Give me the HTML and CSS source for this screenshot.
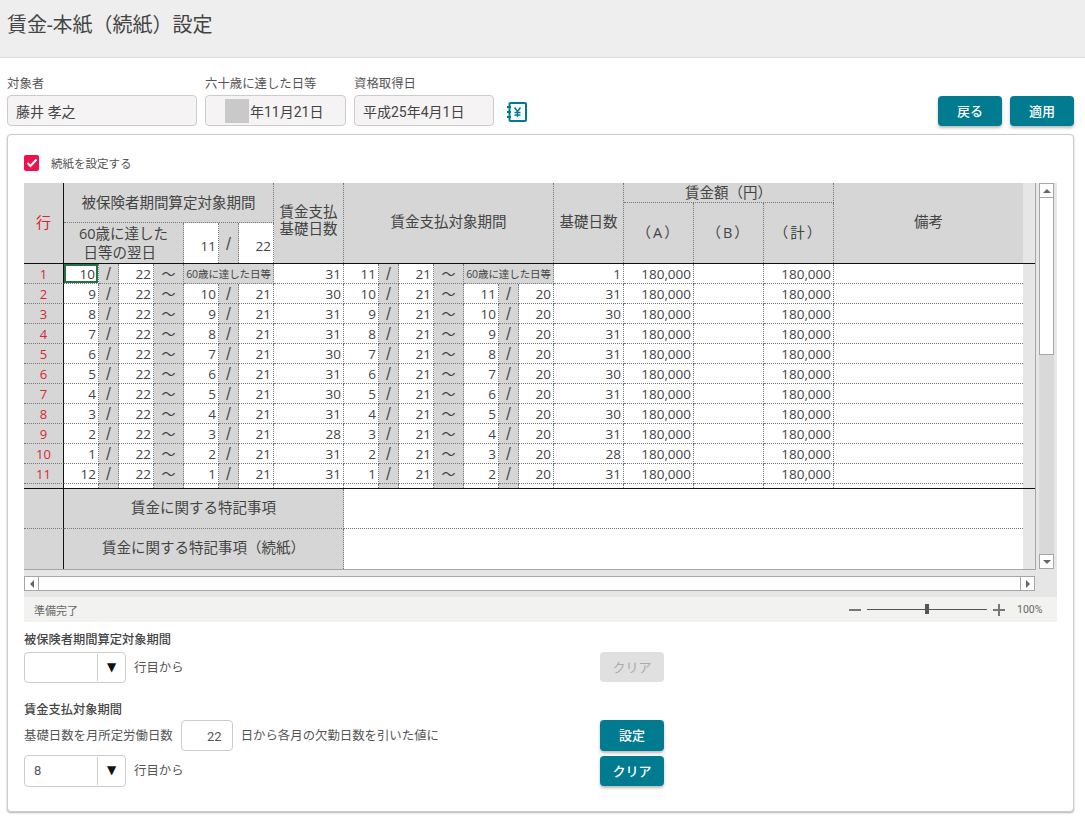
FILE: index.html
```html
<!DOCTYPE html>
<html lang="ja">
<head>
<meta charset="utf-8">
<title>賃金-本紙（続紙）設定</title>
<link rel="stylesheet" href="styles.css">
</head>
<body>
<header class="title-bar"><h1 class="title">賃金-本紙（続紙）設定</h1></header>
<section class="top-row">
  <div class="field f-name"><label class="field-label">対象者</label><div class="field-box">藤井 孝之</div></div>
  <div class="field f-date"><label class="field-label">六十歳に達した日等</label><div class="field-box"><span class="mask"></span>年11月21日</div></div>
  <div class="field f-date2"><label class="field-label">資格取得日</label><div class="field-box">平成25年4月1日</div></div>
  <svg class="yen-icon" width="22" height="22" viewBox="0 0 22 22" fill="none" stroke="#007b8f" stroke-width="2">
    <rect x="3.500" y="2" width="16.500" height="18" rx="1"/>
    <path d="M1 6h4M1 11h4M1 16h4"/>
    <path d="M8.500 6.500l3 4 3-4M11.500 10.500v5.500M8.500 11.500h6M8.500 14h6" stroke-width="1.500"/>
  </svg>
  <div class="top-actions"><button class="btn btn-top">戻る</button><button class="btn btn-top">適用</button></div>
</section>
<main class="card">
  <div class="check-row"><span class="checkbox"><svg width="12" height="10" viewBox="0 0 12 10" fill="none" stroke="#fff" stroke-width="2"><path d="M1.500 5l3 3 6-6.500"/></svg></span><span class="check-label">続紙を設定する</span></div>
  <div class="sheet">
    <div class="sheet-top">
      <div class="sheet-main">
        <div class="pane-head">
        <table class="grid">
          <colgroup><col class="c-row"><col class="c-a"><col class="c-s"><col class="c-a"><col class="c-w"><col class="c-a"><col class="c-s"><col class="c-a"><col class="c-d"><col class="c-a"><col class="c-s"><col class="c-a"><col class="c-w"><col class="c-a"><col class="c-s"><col class="c-a"><col class="c-d"><col class="c-d"><col class="c-d"><col class="c-d"><col class="c-note"></colgroup>
          <tr class="h20">
            <th rowspan="3" class="h-row">行</th>
            <th colspan="7" rowspan="2" class="h-ins">被保険者期間算定対象期間</th>
            <th rowspan="3" class="h-top"><div class="wage-days">賃金支払<br>基礎日数</div></th>
            <th colspan="7" rowspan="3" class="h-mid">賃金支払対象期間</th>
            <th rowspan="3" class="h-mid">基礎日数</th>
            <th colspan="3">賃金額（円）</th>
            <th rowspan="3" class="h-mid h-end">備考</th>
          </tr>
          <tr class="h20">
            <th rowspan="2" class="h-sub">（A）</th>
            <th rowspan="2" class="h-sub">（B）</th>
            <th rowspan="2" class="h-sub">（計）</th>
          </tr>
          <tr class="h40">
            <th colspan="4" class="h-next">60歳に達した<br>日等の翌日&nbsp;&nbsp;</th>
            <td class="n n-low">11</td><th class="sl sl-low">/</th><td class="n n-low">22</td>
          </tr>
        </table>
        </div>
        <div class="pane-body">
        <table class="grid body">
          <colgroup><col class="c-row"><col class="c-a"><col class="c-s"><col class="c-a"><col class="c-w"><col class="c-a"><col class="c-s"><col class="c-a"><col class="c-d"><col class="c-a"><col class="c-s"><col class="c-a"><col class="c-w"><col class="c-a"><col class="c-s"><col class="c-a"><col class="c-d"><col class="c-d"><col class="c-d"><col class="c-d"><col class="c-note"></colgroup>
          <tr><th class="rn">1</th><td class="n cur">10</td><th class="sl">/</th><td class="n">22</td><th class="wv">～</th><th colspan="3" class="tiny">60歳に達した日等</th><td class="n">31</td><td class="n">11</td><th class="sl">/</th><td class="n">21</td><th class="wv">～</th><th colspan="3" class="tiny">60歳に達した日等</th><td class="n">1</td><td class="n">180,000</td><td class="n"></td><td class="n">180,000</td><td></td></tr>
          <tr><th class="rn">2</th><td class="n">9</td><th class="sl">/</th><td class="n">22</td><th class="wv">～</th><td class="n">10</td><th class="sl">/</th><td class="n">21</td><td class="n">30</td><td class="n">10</td><th class="sl">/</th><td class="n">21</td><th class="wv">～</th><td class="n">11</td><th class="sl">/</th><td class="n">20</td><td class="n">31</td><td class="n">180,000</td><td class="n"></td><td class="n">180,000</td><td></td></tr>
          <tr><th class="rn">3</th><td class="n">8</td><th class="sl">/</th><td class="n">22</td><th class="wv">～</th><td class="n">9</td><th class="sl">/</th><td class="n">21</td><td class="n">31</td><td class="n">9</td><th class="sl">/</th><td class="n">21</td><th class="wv">～</th><td class="n">10</td><th class="sl">/</th><td class="n">20</td><td class="n">30</td><td class="n">180,000</td><td class="n"></td><td class="n">180,000</td><td></td></tr>
          <tr><th class="rn">4</th><td class="n">7</td><th class="sl">/</th><td class="n">22</td><th class="wv">～</th><td class="n">8</td><th class="sl">/</th><td class="n">21</td><td class="n">31</td><td class="n">8</td><th class="sl">/</th><td class="n">21</td><th class="wv">～</th><td class="n">9</td><th class="sl">/</th><td class="n">20</td><td class="n">31</td><td class="n">180,000</td><td class="n"></td><td class="n">180,000</td><td></td></tr>
          <tr><th class="rn">5</th><td class="n">6</td><th class="sl">/</th><td class="n">22</td><th class="wv">～</th><td class="n">7</td><th class="sl">/</th><td class="n">21</td><td class="n">30</td><td class="n">7</td><th class="sl">/</th><td class="n">21</td><th class="wv">～</th><td class="n">8</td><th class="sl">/</th><td class="n">20</td><td class="n">31</td><td class="n">180,000</td><td class="n"></td><td class="n">180,000</td><td></td></tr>
          <tr><th class="rn">6</th><td class="n">5</td><th class="sl">/</th><td class="n">22</td><th class="wv">～</th><td class="n">6</td><th class="sl">/</th><td class="n">21</td><td class="n">31</td><td class="n">6</td><th class="sl">/</th><td class="n">21</td><th class="wv">～</th><td class="n">7</td><th class="sl">/</th><td class="n">20</td><td class="n">30</td><td class="n">180,000</td><td class="n"></td><td class="n">180,000</td><td></td></tr>
          <tr><th class="rn">7</th><td class="n">4</td><th class="sl">/</th><td class="n">22</td><th class="wv">～</th><td class="n">5</td><th class="sl">/</th><td class="n">21</td><td class="n">30</td><td class="n">5</td><th class="sl">/</th><td class="n">21</td><th class="wv">～</th><td class="n">6</td><th class="sl">/</th><td class="n">20</td><td class="n">31</td><td class="n">180,000</td><td class="n"></td><td class="n">180,000</td><td></td></tr>
          <tr><th class="rn">8</th><td class="n">3</td><th class="sl">/</th><td class="n">22</td><th class="wv">～</th><td class="n">4</td><th class="sl">/</th><td class="n">21</td><td class="n">31</td><td class="n">4</td><th class="sl">/</th><td class="n">21</td><th class="wv">～</th><td class="n">5</td><th class="sl">/</th><td class="n">20</td><td class="n">30</td><td class="n">180,000</td><td class="n"></td><td class="n">180,000</td><td></td></tr>
          <tr><th class="rn">9</th><td class="n">2</td><th class="sl">/</th><td class="n">22</td><th class="wv">～</th><td class="n">3</td><th class="sl">/</th><td class="n">21</td><td class="n">28</td><td class="n">3</td><th class="sl">/</th><td class="n">21</td><th class="wv">～</th><td class="n">4</td><th class="sl">/</th><td class="n">20</td><td class="n">31</td><td class="n">180,000</td><td class="n"></td><td class="n">180,000</td><td></td></tr>
          <tr><th class="rn">10</th><td class="n">1</td><th class="sl">/</th><td class="n">22</td><th class="wv">～</th><td class="n">2</td><th class="sl">/</th><td class="n">21</td><td class="n">31</td><td class="n">2</td><th class="sl">/</th><td class="n">21</td><th class="wv">～</th><td class="n">3</td><th class="sl">/</th><td class="n">20</td><td class="n">28</td><td class="n">180,000</td><td class="n"></td><td class="n">180,000</td><td></td></tr>
          <tr><th class="rn">11</th><td class="n">12</td><th class="sl">/</th><td class="n">22</td><th class="wv">～</th><td class="n">1</td><th class="sl">/</th><td class="n">21</td><td class="n">31</td><td class="n">1</td><th class="sl">/</th><td class="n">21</td><th class="wv">～</th><td class="n">2</td><th class="sl">/</th><td class="n">20</td><td class="n">31</td><td class="n">180,000</td><td class="n"></td><td class="n">180,000</td><td></td></tr>
          <tr class="r-blank"><th class="rn"></th><td></td><th></th><td></td><th></th><td></td><th></th><td></td><td></td><td></td><th></th><td></td><th></th><td></td><th></th><td></td><td></td><td></td><td></td><td></td><td></td></tr>
        </table>
        </div>
        <div class="pane-foot">
        <table class="grid foot">
          <colgroup><col class="c-row"><col class="c-label"><col class="c-value"></colgroup>
          <tr><th class="blank"></th><th>賃金に関する特記事項</th><td></td></tr>
          <tr><th class="blank"></th><th>賃金に関する特記事項（続紙）</th><td></td></tr>
        </table>
        </div>
      </div>
      <div class="vscroll">
        <span class="sb-btn"><i class="arrow up"></i></span>
        <span class="v-thumb"></span>
        <span class="v-fill"></span>
        <span class="sb-btn"><i class="arrow down"></i></span>
      </div>
    </div>
    <div class="hscroll">
      <span class="sb-btn"><i class="arrow left"></i></span>
      <span class="h-thumb"></span>
      <span class="sb-btn"><i class="arrow right"></i></span>
    </div>
  </div>
  <div class="status">
    <span class="status-text">準備完了</span>
    <div class="zoom">
      <span class="z-minus"></span>
      <span class="z-track"><span class="z-thumb"></span></span>
      <span class="z-plus"></span>
      <span class="z-val">100%</span>
    </div>
  </div>
  <h2 class="sec-title sec-1">被保険者期間算定対象期間</h2>
  <div class="form-row row-first">
    <div class="form-main">
      <div class="select"><span class="sel-val"></span><span class="sel-btn">▼</span></div>
      <span class="form-text">行目から</span>
    </div>
    <button class="btn btn-off" disabled>クリア</button>
  </div>
  <h2 class="sec-title sec-2">賃金支払対象期間</h2>
  <div class="form-row row-days">
    <div class="form-main">
      <span class="form-text flush">基礎日数を月所定労働日数</span>
      <div class="num-box">22</div>
      <span class="form-text">日から各月の欠勤日数を引いた値に</span>
    </div>
    <button class="btn btn-set">設定</button>
  </div>
  <div class="form-row row-last">
    <div class="form-main">
      <div class="select"><span class="sel-val">8</span><span class="sel-btn">▼</span></div>
      <span class="form-text">行目から</span>
    </div>
    <button class="btn btn-clear">クリア</button>
  </div>
</main>
</body>
</html>
```
FILE: styles.css
```css
* { box-sizing: border-box; }
html, body { margin: 0; padding: 0; }
body {
  width: 1085px;
  height: 822px;
  overflow: hidden;
  background: #fff;
  color: #444;
  font-family: Roboto, "Noto Sans CJK JP", sans-serif;
  font-size: 13px;
}
.title-bar {
  height: 58px;
  background: #eee;
  border-bottom: 1px solid #ddd;
  padding: 13px 7px 0;
}
.title { margin: 0; font-size: 20px; font-weight: 400; line-height: 24px; color: #444; }

.top-row { display: flex; align-items: flex-start; padding: 17px 11px 0 7px; height: 76px; }
.field { display: flex; flex-direction: column; margin-right: 8px; }
.f-name { width: 190px; }
.f-date { width: 141px; }
.f-date2 { width: 140px; margin-right: 12px; }
.field-label { font-size: 12.400px; line-height: 18px; padding-bottom: 2px; height: 20px; color: #555; }
.field-box {
  display: flex;
  align-items: center;
  height: 31px;
  padding-left: 8px;
  background: #f5f3f4;
  border: 1px solid #ccc;
  border-radius: 4px;
  font-size: 14px;
  color: #444;
}
.mask { width: 24px; height: 24px; margin-left: 11px; margin-right: 1px; background: #c9c9c9; }
.yen-icon { margin-top: 26px; }
.top-actions { display: flex; gap: 8px; margin-left: auto; margin-top: 21px; }

.btn {
  width: 64px;
  padding: 0 0 2px;
  border: 0;
  border-radius: 4px;
  background: #007b8f;
  color: #fff;
  font-family: inherit;
  font-size: 13px;
  font-weight: 500;
  box-shadow: 0 2px 3px rgba(0,0,0,.28);
}
.btn-top { height: 30px; }
.btn-off { height: 30px; align-self: flex-start; background: #e0e0e0; color: #aaa; box-shadow: none; font-weight: 400; }
.btn-set { height: 31px; }
.btn-clear { height: 30px; }

.card {
  width: 1067px;
  height: 678px;
  margin-left: 7px;
  padding: 20px 16px 0;
  border: 1px solid #ccc;
  border-radius: 4px;
  box-shadow: 0 1px 2px rgba(0,0,0,.3);
  background: #fff;
}
.check-row { display: flex; align-items: center; height: 16px; }
.checkbox {
  display: flex;
  align-items: center;
  justify-content: center;
  width: 15px;
  height: 16px;
  margin-right: 12px;
  background: #f0104f;
  border-radius: 2px;
}
.check-label { font-size: 11.500px; color: #555; }

.sheet { width: 1033px; height: 414px; margin-top: 12px; background: #e6e6e6; }
.sheet-top { display: flex; height: 387px; }
.sheet-main { width: 1012px; height: 387px; border-right: 1px solid #a6a6a6; border-bottom: 1px solid #a6a6a6; }
.pane-head { height: 81px; border-bottom: 1px solid #111; width: 1011px; }
.pane-body { height: 225px; overflow: hidden; border-bottom: 1px solid #111; width: 1011px; }
.pane-foot { height: 80px; }

.grid { border-collapse: separate; border-spacing: 0; table-layout: fixed; width: 999px; font-family: "Open Sans", "Noto Sans CJK JP", sans-serif; }
.c-row { width: 40px; }
.c-a { width: 35px; }
.c-s { width: 20px; }
.c-w { width: 30px; }
.c-d { width: 70px; }
.c-note { width: 189px; }
.c-label { width: 280px; }
.c-value { width: 679px; }

.grid th, .grid td {
  padding: 0;
  font-weight: 400;
  line-height: 18px;
  color: #444;
  border-right: 1px dotted #777;
  border-bottom: 1px dotted #777;
  overflow: hidden;
  white-space: nowrap;
}
.grid th { background: #d6d6d6; font-size: 14.500px; text-align: center; }
.grid td { background: #fff; }
.h20 { height: 20px; }
.h40 { height: 40px; }
.grid tr:last-child > th, .grid tr:last-child > td { border-bottom: 0; }
.grid .h-row, .grid .rn, .grid .blank { border-right: 1px solid #111; }
.grid .h-row { color: #d9272e; font-size: 15px; padding-bottom: 2px; border-bottom: 0; }
.grid .h-top, .grid .h-mid, .grid .h-sub { border-bottom: 0; }
.h-top { vertical-align: top; }
.wage-days { margin-top: 20px; line-height: 17px; }
.grid .h-mid { padding-bottom: 2px; }
.grid .h-end { border-right: 0; }
.grid .h-sub { letter-spacing: 2px; }
.grid .h-next { line-height: 19px; }
.grid .n { text-align: right; font-size: 13.500px; padding-right: 2px; }
.grid .n-low { vertical-align: bottom; padding-bottom: 8px; border-bottom: 0; }
.grid.body th, .grid.body td { height: 20px; }
.grid.body tr:last-child > th, .grid.body tr:last-child > td { border-bottom: 1px dotted #777; }
.grid.body td:last-child { border-right: 0; }
.grid .rn { color: #d9272e; font-size: 13px; font-weight: 500; }
.grid .sl { font-size: 18px; font-weight: 400; color: #555; font-family: "Liberation Sans", sans-serif; }
.grid .sl-low { padding-top: 2px; }
.grid .wv { font-size: 14px; }
.grid .tiny { font-size: 10.500px; letter-spacing: -.1px; }
.grid .cur { box-shadow: inset 0 0 0 2px #217346; padding-right: 3px; }
.foot { width: 999px; }
.grid.foot th, .grid.foot td { height: 40px; padding-bottom: 2px; }
.grid.foot td { border-right: 0; }

.vscroll { display: flex; flex-direction: column; width: 15px; height: 386px; margin-left: 3px; background: #d9d9d9; }
.sb-btn { display: flex; align-items: center; justify-content: center; width: 15px; height: 15px; flex: none; background: #fff; border: 1px solid #a6a6a6; }
.v-thumb { height: 157px; flex: none; background: #fff; border: 1px solid #a6a6a6; border-top: 0; }
.v-fill { flex: 1; }
.arrow { display: block; width: 0; height: 0; border: 4px solid transparent; }
.arrow.up { border-bottom-color: #666; margin-top: -4px; }
.arrow.down { border-top-color: #666; margin-top: 4px; }
.arrow.left { border-right-color: #666; margin-left: -4px; }
.arrow.right { border-left-color: #666; margin-left: 4px; }

.hscroll { display: flex; width: 1011px; height: 15px; margin-top: 6px; }
.h-thumb { flex: 1; background: #fff; border: 1px solid #a6a6a6; border-width: 1px 0; }

.status {
  display: flex;
  align-items: center;
  justify-content: space-between;
  width: 1033px;
  height: 25px;
  padding: 0 14px 0 10px;
  background: #f2f2f1;
  font-size: 11px;
  color: #666;
}
.zoom { display: flex; align-items: center; }
.z-minus { width: 12px; height: 2px; background: #777; margin-right: 6px; }
.z-track { position: relative; display: block; width: 120px; height: 1px; background: #555; margin-right: 6px; }
.z-thumb { position: absolute; left: 58px; top: -5px; width: 4px; height: 10px; background: #555; }
.z-plus { width: 12px; height: 12px; margin-right: 12px; background: linear-gradient(#777,#777) center/12px 2px no-repeat, linear-gradient(#777,#777) center/2px 12px no-repeat; }
.z-val { font-size: 10.500px; width: 26px; }

.sec-title { margin: 0; font-size: 12.250px; line-height: 16px; font-weight: 500; color: #444; }
.sec-1 { margin-top: 10px; }
.sec-2 { margin-top: 19px; }
.form-row { display: flex; align-items: center; width: 640px; }
.form-main { display: flex; align-items: center; width: 576px; }
.form-text { margin-left: 8px; padding-bottom: 2px; font-size: 12.400px; color: #555; }
.form-text.flush { margin-left: 0; }
.select { display: flex; width: 102px; height: 31px; border: 1px solid #ccc; border-radius: 4px; background: #fff; }
.row-last .select { height: 32px; }
.sel-val { width: 72px; padding-left: 9px; line-height: 29px; font-size: 13px; color: #555; }
.sel-btn { width: 28px; margin: 1px 0; border-left: 1px solid #ccc; text-align: center; line-height: 27px; font-size: 12px; color: #111; font-family: "DejaVu Sans", sans-serif; }
.num-box { width: 52px; height: 31px; margin-left: 8px; padding-right: 10px; border: 1px solid #ccc; border-radius: 4px; text-align: right; line-height: 31px; font-size: 13px; color: #555; }
.row-first { margin-top: 4px; }
.row-days { margin-top: 2px; }
.row-last { margin-top: 4px; }
```
